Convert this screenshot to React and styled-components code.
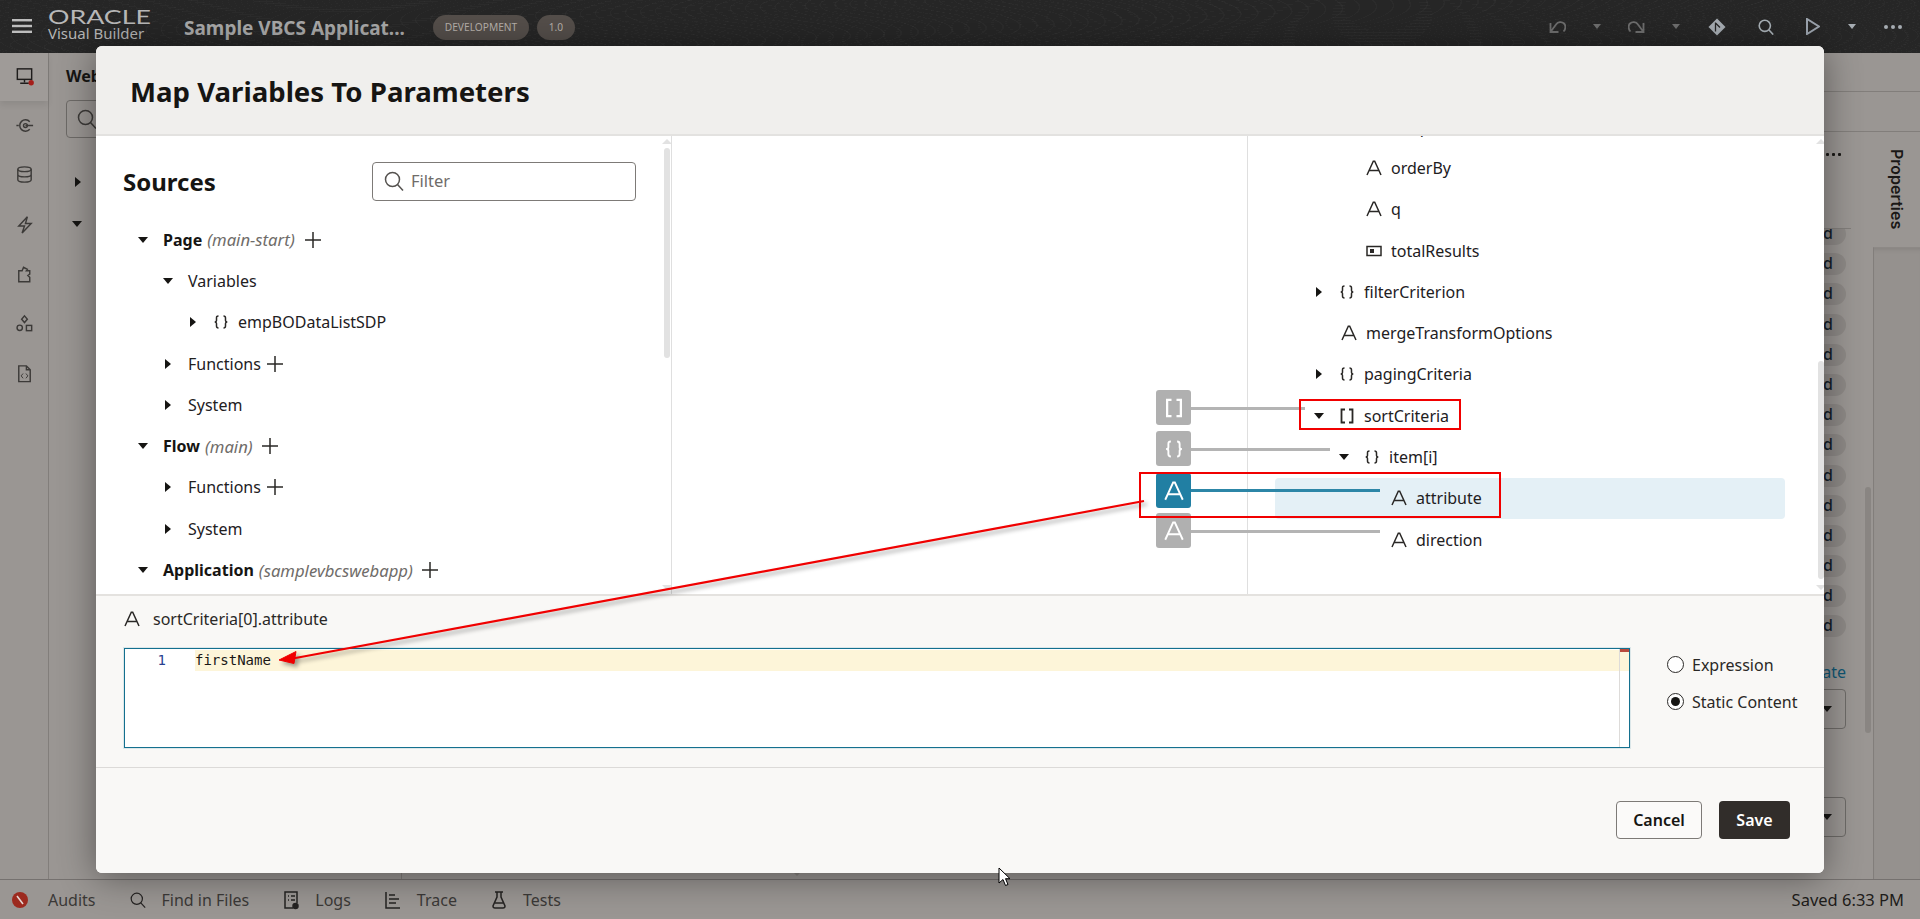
import React from 'react';
import styled, { createGlobalStyle } from 'styled-components';

const Global = createGlobalStyle`
  html, body { margin: 0; height: 100%; overflow: hidden; background: #9a9693; }
  body { font-family: "Noto Sans", "Open Sans", sans-serif; color: #161513; }
  #root { height: 100%; }
  * { box-sizing: border-box; }
`;

const Shell = styled.div`position: relative; width: 1920px; height: 919px; display: flex; flex-direction: column; overflow: hidden;`;

/* ---------- top bar ---------- */
const TopBar = styled.header`
  height: 53px; flex: none; display: flex; align-items: center; padding-left: 12px; color: #b5b5b5;
  background-color: #262626;
  background-image:
    repeating-radial-gradient(ellipse at 18% 120%, transparent 0 9px, rgba(255,255,255,.025) 9px 10px),
    repeating-radial-gradient(ellipse at 72% -30%, transparent 0 11px, rgba(255,255,255,.025) 11px 12px);
`;
const Burger = styled.svg`width: 20px; height: 14px; margin-right: 16px; flex: none; margin-top: -1px;`;
const LogoBlock = styled.div`width: 103px; margin-top: -2px; flex: none; display: flex; flex-direction: column;`;
const LogoMark = styled.svg`display: block; width: 103px; height: 15px; overflow: visible;`;
const LogoSub = styled.div`font-size: 15px; line-height: 17px; color: #b5b5b5; white-space: nowrap;`;
const AppTitle = styled.div`margin-left: 33px; width: 217px; font-size: 19px; font-weight: 700; color: #a8a8a8; white-space: nowrap; margin-top: 2px;`;
const Pill = styled.div`
  height: 25px; border-radius: 13px; background: #544e4a; color: #b4afa9; font-size: 10.2px; display: flex; align-items: center; justify-content: center;
  width: ${p => p.$w}px; margin-left: ${p => p.$ml}px; margin-top: 1px;
`;
const ToolGrid = styled.div`
  margin-left: auto; padding-right: 6px; display: grid; align-items: center; justify-items: center;
  grid-template-columns: 40px 40px 39px 40px 42px 56px 38px 40px 42px;
`;
const TinyCaret = styled.span`width: 0; height: 0; border-left: 4.5px solid transparent; border-right: 4.5px solid transparent; border-top: 5px solid ${p => p.$c};`;
const HistorySvg = styled.svg`width: 17px; height: 13px; fill: none; stroke: #6e6e6e; stroke-width: 1.8;`;
const GitSvg = styled.svg`width: 18px; height: 18px;`;
const PlaySvg = styled.svg`width: 14px; height: 17px; fill: none; stroke: #9ba3ad; stroke-width: 2;`;
const ToolDots = styled.div`display: flex; gap: 3px;
  span { width: 4px; height: 4px; border-radius: 50%; background: #a6acb2; }`;

/* ---------- behind modal ---------- */
const Main = styled.div`flex: 1; display: flex; min-height: 0; background: #9a9693;`;
const Rail = styled.nav`width: 49px; flex: none; border-right: 1px solid #827e7b; display: flex; flex-direction: column; align-items: center;`;
const RailItem = styled.div`
  width: 100%; display: flex; align-items: center; justify-content: center; flex: none; height: ${p => p.$active ? 47.5 : 49.6}px;
  ${p => p.$active && 'background: #9f9b98; box-shadow: 0 4px 6px rgba(0,0,0,.08);'}
  svg { width: 21px; height: 21px; fill: none; stroke: #3c3a38; stroke-width: 1.5; }
`;
const NavPanel = styled.section`width: 353px; flex: none; border-right: 1px solid #827e7b; padding: 12px 0 0 17px; position: relative;`;
const NavTitle = styled.div`font-size: 16px; line-height: 22px; font-weight: 700;`;
const NavSearch = styled.div`margin-top: 13px; height: 38px; width: 300px; border: 1px solid #6d6a67; border-radius: 4px; display: flex; align-items: center; padding-left: 10px; color: #3c3a38;`;
const NavCaretRow = styled.div`height: 20px; padding-left: ${p => p.$pl}px; display: flex; align-items: center; margin-top: ${p => p.$mt}px;`;
const Work = styled.section`flex: 1; min-width: 0; display: flex; flex-direction: column;`;
const Band = styled.div`flex: none; height: ${p => p.$h}px; border-bottom: 1px solid #827e7b;`;
const WorkRow = styled.div`flex: 1; min-height: 0; display: flex;`;
const Inspector = styled.div`flex: 1; position: relative; display: flex; flex-direction: column; align-items: flex-end; padding-right: 27px;`;
const Dots = styled.div`display: flex; gap: 3px; margin-top: 21px; margin-right: 5px; height: 3px; flex: none;
  span { width: 3px; height: 3px; background: #1a1816; border-radius: 1px; }`;
const ChipHead = styled.div`width: 300px; margin-right: -5px; height: 73px; flex: none; border-bottom: 1px solid #827e7b;`;
const ChipClip = styled.div`width: 200px; overflow: hidden; display: flex; flex-direction: column; align-items: flex-end; gap: 8.2px; flex: none; height: 410px;`;
const Chip = styled.div`height: 22px; flex: none; width: 120px; border-radius: 11px; background: #8d8986; text-align: right; padding-right: 13px; font-size: 16px; line-height: 21px; font-weight: 500; color: #14202a; margin-top: ${p => p.$first ? -6 : 0}px;`;
const LinkText = styled.div`font-size: 16px; color: #0f5673; margin-top: 22px; line-height: 22px; flex: none;`;
const FakeSelect = styled.div`width: 200px; height: 40px; border: 1px solid #6d6a67; border-radius: 4px; flex: none; margin-top: ${p => p.$mt}px; display: flex; align-items: center; justify-content: flex-end; padding-right: 13px;`;
const InspectorBar = styled.div`position: absolute; right: 2px; top: 355px; width: 6px; height: 246px; border-radius: 3px; background: #898582;`;
const GreyArrow = styled.span`
  position: absolute; width: 0; height: 0; border-left: 5px solid transparent; border-right: 5px solid transparent;
  ${p => p.$down ? `border-top: 5px solid ${p.$c};` : `border-bottom: 5px solid ${p.$c};`}
  left: ${p => p.$x}px; top: ${p => p.$y}px;
`;
const PropColumn = styled.aside`width: 47px; flex: none; display: flex; flex-direction: column;`;
const PropTab = styled.div`height: 115px; flex: none; display: flex; justify-content: center; padding-top: 17px;`;
const PropLabel = styled.div`writing-mode: vertical-rl; font-family: Inter, "Noto Sans", sans-serif; font-size: 16px; font-weight: 600; color: #1a1816; line-height: 20px;`;
const PropPane = styled.div`flex: 1; border-left: 1px solid #827e7b; border-top: 1px solid #8d8986; box-shadow: inset 0 5px 5px -4px rgba(0,0,0,.12); background: #95918e;`;

const StatusBar = styled.footer`height: 40px; flex: none; border-top: 1px solid #75716f; background: #9a9693; display: flex; align-items: center; padding: 0 16px 0 12px; font-size: 16px; color: #3b3937;`;
const StatusItem = styled.div`display: flex; align-items: center; gap: ${p => p.$gap || 16}px; margin-right: 34px;
  svg { width: 16px; height: 20px; fill: none; stroke: #252322; stroke-width: 1.5; flex: none; }`;
const Saved = styled.div`margin-left: auto; color: #1e1c1a; font-size: 16.5px;`;

/* ---------- modal ---------- */
const Modal = styled.div`
  position: absolute; left: 96px; top: 46px; width: 1728px; height: 827px; border-radius: 6px; background: #fff; overflow: hidden;
  display: flex; flex-direction: column;
`;
const ModalShadow = styled.div`position: absolute; left: 96px; top: 46px; width: 1728px; height: 827px; border-radius: 6px; box-shadow: 0 4px 36px rgba(0,0,0,.42);`;
const ModalHead = styled.div`height: 90px; flex: none; background: #f0efed; border-bottom: 2px solid #e3e2e0; padding-left: 34px; display: flex; align-items: center;`;
const ModalTitle = styled.h1`margin: 2px 0 0; font-size: 27.6px; font-weight: 700; color: #161513;`;
const ModalBody = styled.div`position: relative; height: 458px; flex: none; display: flex;`;
const Column = styled.div`width: 576px; flex: none; position: relative; overflow: hidden; ${p => p.$border && 'border-right: 1px solid #dfdfdf;'}`;
const SourcesHead = styled.div`display: flex; align-items: center; justify-content: space-between; padding: 26px 35px 0 27px; margin-bottom: 18.5px;`;
const SourcesTitle = styled.h2`margin: 0; font-size: 24px; font-weight: 700; line-height: 38px;`;
const FilterBox = styled.div`width: 264px; height: 39px; border: 1px solid #7d7a77; border-radius: 4px; display: flex; align-items: center; padding: 0 0 2px 11px; gap: 7px; font-size: 16.5px; color: #6f6c69;`;
const RightTree = styled.div`margin-top: -29.5px;`;
const Row = styled.div`
  height: 41.3px; display: flex; align-items: center; font-size: 16px; white-space: nowrap; color: #22201e;
  padding-left: ${p => p.$pl}px; padding-bottom: 1px;
  ${p => p.$selected && 'background: #e4f0f6; border-radius: 4px; margin: 0 39px 0 27px;'}
`;
const CaretSlot = styled.span`width: 25px; flex: none; display: flex; align-items: center;`;
const Caret = styled.span`
  width: 0; height: 0; display: block;
  ${p => p.$open
    ? 'border-left: 5.5px solid transparent; border-right: 5.5px solid transparent; border-top: 6px solid #161513;'
    : 'border-top: 5.5px solid transparent; border-bottom: 5.5px solid transparent; border-left: 6px solid #161513; margin-left: 2px;'}
`;
const IconSlot = styled.span`width: ${p => p.$w || 25}px; padding-left: ${p => p.$inset || 0}px; flex: none; display: flex; align-items: center; color: #2a2826;`;
const Strong = styled.span`font-weight: 700; color: #161513;`;
const Note = styled.em`color: #6f6c69; margin-left: 5px; font-size: 16.7px;`;
const AddSvg = styled.svg`width: 16px; height: 16px; flex: none; margin-left: ${p => p.$ml}px; stroke: #2a2826; stroke-width: 1.5;`;
const Thumb = styled.div`position: absolute; left: ${p => p.$x}px; top: ${p => p.$y}px; width: 6px; height: ${p => p.$h}px; border-radius: 3px; background: #e2e2e2;`;

const MapCanvas = styled.div`position: absolute; inset: 0; pointer-events: none;`;
const MapNode = styled.div`
  position: absolute; left: 1060px; top: ${p => p.$top}px; width: 35px; height: 35px; border-radius: 3px;
  background: ${p => p.$active ? '#217fa3' : '#b0b0b0'}; color: #fff; display: flex; align-items: center; justify-content: center;
`;
const MapLine = styled.div`
  position: absolute; left: 1095px; top: ${p => p.$top}px; width: ${p => p.$w}px; height: 3px;
  background: ${p => p.$active ? '#2c86a7' : '#b4b4b4'};
`;
const RedBox = styled.div`
  position: absolute; left: ${p => p.$x}px; top: ${p => p.$y}px; width: ${p => p.$w}px; height: ${p => p.$h}px; border: 2px solid #f10000;
`;

const ExprSection = styled.div`height: 174px; flex: none; background: #f9f8f6; border-top: 2px solid #e4e2df; border-bottom: 1px solid #dcdad8; padding: 12px 0 0 28px;`;
const ExprLabel = styled.div`display: flex; align-items: center; height: 22px; font-size: 16px; color: #2a2826;`;
const EditorRow = styled.div`display: flex; margin-top: 18px;`;
const Editor = styled.div`position: relative; width: 1506px; height: 100px; background: #fff; border: 1px solid #14708f; box-shadow: 0 0 0 1px rgba(20,112,143,.12); flex: none;`;
const CodeLine = styled.div`display: flex; height: 21px; align-items: center; font-family: "DejaVu Sans Mono", "Liberation Mono", monospace; font-size: 14px; margin-top: 1px;`;
const LineNo = styled.div`width: 70px; flex: none; text-align: right; padding-right: 29px; color: #2a3f8f; line-height: 21px;`;
const LineText = styled.div`flex: 1; background: #fdf5d9; line-height: 21px; color: #1a1816;`;
const EditorRail = styled.div`position: absolute; right: 0; top: 0; bottom: 0; width: 10px; border-left: 1px solid #dddbd9;
  &::before { content: ''; display: block; height: 3px; background: #b84a3c; }`;
const RadioGroup = styled.div`margin-left: 37px; padding-top: 7px; display: flex; flex-direction: column; gap: 18px;`;
const RadioRow = styled.div`display: flex; align-items: center; height: 19px; gap: 8px; font-size: 16px; color: #2a2826; white-space: nowrap;`;
const RadioDot = styled.span`
  width: 17px; height: 17px; border-radius: 50%; border: 1.5px solid #2b2927; background: #fff; display: flex; align-items: center; justify-content: center; flex: none;
  &::after { content: ''; width: 9px; height: 9px; border-radius: 50%; background: ${p => p.$on ? '#161513' : 'transparent'}; }
`;
const ModalFoot = styled.div`flex: 1; background: #f9f8f6; display: flex; justify-content: flex-end; gap: 17px; padding: 33px 34px 0 0;`;
const Btn = styled.button`
  height: 38px; width: ${p => p.$w}px; border-radius: 4px; font-family: inherit; font-size: 16px; font-weight: 600; padding: 0;
  ${p => p.$primary ? 'background:#312d2a;color:#fff;border:0;' : 'background:#fbfaf9;color:#161513;border:1px solid #7d7a77;'}
`;
const ArrowSvg = styled.svg`position: absolute; left: 270px; top: 490px; width: 890px; height: 180px; overflow: visible; filter: drop-shadow(3px 3px 2px rgba(0,0,0,.38));`;
const CursorSvg = styled.svg`position: absolute; left: 998px; top: 867px; width: 13px; height: 20px;`;

/* ---------- icons ---------- */
const TypeIcon = ({ kind, size = 16, color = 'currentColor' }) => {
  const common = { width: size, height: size, viewBox: '0 0 16 16', fill: 'none', stroke: color, strokeWidth: 1.5 };
  if (kind === 'A') return <svg {...common}><path d="M1 15 7.300 1.200h1.400L15 15M3.500 10.600h9" /></svg>;
  if (kind === 'obj') return <svg {...common}><path d="M5.500 2c-1.800 0-2 .8-2 2v2.500c0 1-.6 1.500-1.800 1.500 1.200 0 1.800.5 1.800 1.500V12c0 1.200.2 2 2 2M10.500 2c1.800 0 2 .8 2 2v2.500c0 1 .6 1.500 1.800 1.500-1.200 0-1.800.5-1.800 1.500V12c0 1.200-.2 2-2 2" /></svg>;
  if (kind === 'arr') return <svg {...common} strokeWidth="1.8"><path d="M6 1.500H2.500v13H6M10 1.500h3.500v13H10" /></svg>;
  return <svg {...common}><rect x="1" y="3.500" width="14" height="9" /><rect x="4" y="6" width="4" height="4" fill={color} stroke="none" /></svg>;
};
const SearchIcon = ({ size = 20, color = 'currentColor', sw = 1.5 }) => (
  <svg width={size} height={size} viewBox="0 0 20 20" fill="none" stroke={color} strokeWidth={sw}><circle cx="8.500" cy="8.500" r="7" /><path d="m13.500 13.500 5.500 6" /></svg>
);
const Plus = ({ ml }) => <AddSvg $ml={ml} viewBox="0 0 16 16"><path d="M8 0v16M0 8h16" /></AddSvg>;

const Tree = ({ pl, open, leaf, icon, iw, inset, children, selected }) => (
  <Row $pl={pl} $selected={selected}>
    <CaretSlot>{!leaf && <Caret $open={open} />}</CaretSlot>
    {icon && <IconSlot $w={iw} $inset={inset}><TypeIcon kind={icon} /></IconSlot>}
    {children}
  </Row>
);

const mappings = [
  { kind: 'arr', top: 254, line: 270.5, w: 114 },
  { kind: 'obj', top: 295, line: 311.5, w: 139 },
  { kind: 'A', top: 337, line: 353, w: 189, active: true },
  { kind: 'A', top: 377, line: 394, w: 189 },
];

export default function App() {
  return (
    <Shell>
      <Global />
      <TopBar>
        <Burger viewBox="0 0 20 14" fill="#bdbdbd"><rect width="20" height="2.400" /><rect y="5.800" width="20" height="2.400" /><rect y="11.600" width="20" height="2.400" /></Burger>
        <LogoBlock>
          <LogoMark viewBox="0 0 103 15"><text x="0" y="13.500" textLength="103" lengthAdjust="spacingAndGlyphs" fontFamily="Lato, sans-serif" fontSize="18.500" fill="#b8b8b8">ORACLE</text></LogoMark>
          <LogoSub>Visual Builder</LogoSub>
        </LogoBlock>
        <AppTitle>Sample VBCS Applicat...</AppTitle>
        <Pill $w={96} $ml={32}>DEVELOPMENT</Pill>
        <Pill $w={38} $ml={8}>1.0</Pill>
        <ToolGrid>
          <HistorySvg viewBox="0 0 17 13"><path d="M1.500 3v9h8M1.500 12 7 4.500c2-3 6-3 8-1s1.800 5.500-.5 8" /></HistorySvg>
          <TinyCaret $c="#6e6e6e" />
          <HistorySvg viewBox="0 0 17 13"><path d="M15.500 3v9h-8M15.500 12 10 4.500c-2-3-6-3-8-1S.2 9 2.500 11.500" /></HistorySvg>
          <TinyCaret $c="#6e6e6e" />
          <GitSvg viewBox="0 0 18 18"><path d="M9 .5 17.500 9 9 17.500.5 9Z" fill="#a6acb2" /><path d="M7.500 4.500v9M7.500 5l4.500 4.500" stroke="#262626" strokeWidth="1.300" fill="none" /></GitSvg>
          <SearchIcon size={16} color="#a8b0b6" sw={2} />
          <PlaySvg viewBox="0 0 14 17"><path d="M1 1v15l12-7.500Z" /></PlaySvg>
          <TinyCaret $c="#a6acb2" />
          <ToolDots><span /><span /><span /></ToolDots>
        </ToolGrid>
      </TopBar>

      <Main>
        <Rail>
          <RailItem $active>
            <svg viewBox="0 0 22 22"><rect x="3.500" y="3" width="15" height="11" stroke="#1f1d1c" /><path d="M11 14v3M6.500 18h9" stroke="#1f1d1c" /><circle cx="18" cy="17.500" r="2.800" fill="#a51e1a" stroke="none" /></svg>
          </RailItem>
          <RailItem><svg viewBox="0 0 22 22"><path d="M16.500 7a6 6 0 1 0 0 8" /><circle cx="12" cy="11" r="2" /><path d="M12 11h8M2.500 11h2.500" /></svg></RailItem>
          <RailItem><svg viewBox="0 0 22 22"><ellipse cx="11" cy="5.500" rx="7" ry="2.500" /><path d="M4 5.500v11c0 1.400 3 2.500 7 2.500s7-1.100 7-2.500v-11M4 11c0 1.400 3 2.500 7 2.500s7-1.100 7-2.500" /></svg></RailItem>
          <RailItem><svg viewBox="0 0 22 22"><path d="M14 3 5 12.500h6L8.500 20 18 10h-6z" /></svg></RailItem>
          <RailItem><svg viewBox="0 0 22 22"><path d="M5 7h3.500l1.500-3.500 4 2L13 7h3.500v3.500l-2 1.500 2 2v4.500H5z" /></svg></RailItem>
          <RailItem><svg viewBox="0 0 22 22"><path d="m11 3 3 3.500-3 3.500-3-3.500z" /><circle cx="6" cy="15.500" r="2.800" /><rect x="13" y="13" width="5.500" height="5.500" /></svg></RailItem>
          <RailItem><svg viewBox="0 0 22 22"><path d="M5 3h8l4 4v12.500H5zM13 3v4h4" /><path d="m9.500 11-2 2.500 2 2.500M12.500 11l2 2.500-2 2.500" strokeWidth="1" /></svg></RailItem>
        </Rail>
        <NavPanel>
          <NavTitle>Web Applications</NavTitle>
          <NavSearch><SearchIcon size={20} /></NavSearch>
          <NavCaretRow $pl={7} $mt={34}><Caret /></NavCaretRow>
          <NavCaretRow $pl={6} $mt={22}><Caret $open /></NavCaretRow>
        </NavPanel>
        <Work>
          <Band $h={39} />
          <Band $h={40} />
          <WorkRow>
            <Inspector>
              <Dots><span /><span /><span /></Dots>
              <ChipHead />
              <ChipClip>
                {Array.from({ length: 14 }, (_, i) => <Chip key={i} $first={i === 0}>Required</Chip>)}
              </ChipClip>
              <LinkText>Create</LinkText>
              <FakeSelect $mt={6}><Caret $open /></FakeSelect>
              <FakeSelect $mt={68}><Caret $open /></FakeSelect>
              <GreyArrow $x={390} $y={100} $c="#85817e" />
              <GreyArrow $x={390} $y={739} $c="#85817e" $down />
              <InspectorBar />
            </Inspector>
            <PropColumn>
              <PropTab><PropLabel>Properties</PropLabel></PropTab>
              <PropPane />
            </PropColumn>
          </WorkRow>
        </Work>
      </Main>

      <StatusBar>
        <StatusItem $gap={20}>
          <svg viewBox="0 0 16 20"><circle cx="8" cy="10" r="8" fill="#9c2a1f" stroke="none" /><path d="m5 6 6 8" stroke="#e8d8d4" /></svg>
          Audits
        </StatusItem>
        <StatusItem $gap={16}><SearchIcon size={16} color="#252322" />Find in Files</StatusItem>
        <StatusItem $gap={16}>
          <svg viewBox="0 0 16 20"><path d="M10 18H2V2h12v11" /><path d="M5 6h1M8 6h4M5 10h1M8 10h4" /><circle cx="12.500" cy="16" r="2.500" fill="#252322" /></svg>
          Logs
        </StatusItem>
        <StatusItem $gap={16}>
          <svg viewBox="0 0 16 20"><path d="M1 2v16h14M4 5h6M4 9h10M4 13h7" /></svg>
          Trace
        </StatusItem>
        <StatusItem $gap={16}>
          <svg viewBox="0 0 16 20"><path d="M4 2h8M6 2v5L2 16c0 1 .5 2 2 2h8c1.500 0 2-1 2-2l-4-9V2" /><path d="M4 13h8" /></svg>
          Tests
        </StatusItem>
        <Saved>Saved 6:33 PM</Saved>
      </StatusBar>

      <ModalShadow />
      <Modal>
        <ModalHead><ModalTitle>Map Variables To Parameters</ModalTitle></ModalHead>
        <ModalBody>
          <Column $border>
            <SourcesHead>
              <SourcesTitle>Sources</SourcesTitle>
              <FilterBox><SearchIcon size={20} color="#55524f" />Filter</FilterBox>
            </SourcesHead>
            <Tree pl={42} open><Strong>Page</Strong><Note>(main-start)</Note><Plus ml={10} /></Tree>
            <Tree pl={67} open>Variables</Tree>
            <Tree pl={92} icon="obj">empBODataListSDP</Tree>
            <Tree pl={67}>Functions<Plus ml={6} /></Tree>
            <Tree pl={67}>System</Tree>
            <Tree pl={42} open><Strong>Flow</Strong><Note>(main)</Note><Plus ml={9} /></Tree>
            <Tree pl={67}>Functions<Plus ml={6} /></Tree>
            <Tree pl={67}>System</Tree>
            <Tree pl={42} open><Strong>Application</Strong><Note>(samplevbcswebapp)</Note><Plus ml={9} /></Tree>
            <Thumb $x={568} $y={12} $h={210} />
            <GreyArrow $x={566} $y={3} $c="#e2e2e2" />
            <GreyArrow $x={566} $y={449} $c="#e2e2e2" $down />
          </Column>
          <Column $border />
          <Column>
            <RightTree>
              <Tree pl={91} leaf icon="A" iw={27} inset={2}>endpoint</Tree>
              <Tree pl={91} leaf icon="A" iw={27} inset={2}>orderBy</Tree>
              <Tree pl={91} leaf icon="A" iw={27} inset={2}>q</Tree>
              <Tree pl={91} leaf icon="num" iw={27} inset={2}>totalResults</Tree>
              <Tree pl={66} icon="obj">filterCriterion</Tree>
              <Tree pl={66} leaf icon="A" iw={27} inset={2}>mergeTransformOptions</Tree>
              <Tree pl={66} icon="obj">pagingCriteria</Tree>
              <Tree pl={66} open icon="arr">sortCriteria</Tree>
              <Tree pl={91} open icon="obj">item[i]</Tree>
              <Tree pl={89} leaf icon="A" iw={27} inset={2} selected>attribute</Tree>
              <Tree pl={116} leaf icon="A" iw={27} inset={2}>direction</Tree>
            </RightTree>
            <Thumb $x={570} $y={225} $h={218} />
            <GreyArrow $x={568} $y={3} $c="#e2e2e2" />
            <GreyArrow $x={568} $y={449} $c="#e2e2e2" $down />
          </Column>
          <MapCanvas>
            {mappings.map((m, i) => (
              <React.Fragment key={i}>
                <MapLine $top={m.line} $w={m.w} $active={m.active} />
                <MapNode $top={m.top} $active={m.active}><TypeIcon kind={m.kind} size={20} color="#fff" /></MapNode>
              </React.Fragment>
            ))}
            <RedBox $x={1203} $y={263} $w={162} $h={31} />
            <RedBox $x={1043} $y={336} $w={362} $h={46} />
          </MapCanvas>
        </ModalBody>
        <ExprSection>
          <ExprLabel>
            <IconSlot $w={29}><TypeIcon kind="A" /></IconSlot>
            sortCriteria[0].attribute
          </ExprLabel>
          <EditorRow>
            <Editor>
              <CodeLine><LineNo>1</LineNo><LineText>firstName</LineText></CodeLine>
              <EditorRail />
            </Editor>
            <RadioGroup>
              <RadioRow><RadioDot />Expression</RadioRow>
              <RadioRow><RadioDot $on />Static Content</RadioRow>
            </RadioGroup>
          </EditorRow>
        </ExprSection>
        <ModalFoot>
          <Btn $w={86}>Cancel</Btn>
          <Btn $w={71} $primary>Save</Btn>
        </ModalFoot>
      </Modal>

      <ArrowSvg viewBox="0 0 890 180">
        <path d="M874 11 20 169" stroke="#f00000" strokeWidth="2.200" fill="none" />
        <path d="M9 170 26 161.500 24 173.500Z" fill="#f00000" stroke="#f00000" />
      </ArrowSvg>
      <CursorSvg viewBox="0 0 13 20"><path d="M1 1v15l4-3.500 2.500 6 2.500-1-2.500-5.800H12Z" fill="#fff" stroke="#000" strokeWidth="1" /></CursorSvg>
    </Shell>
  );
}
